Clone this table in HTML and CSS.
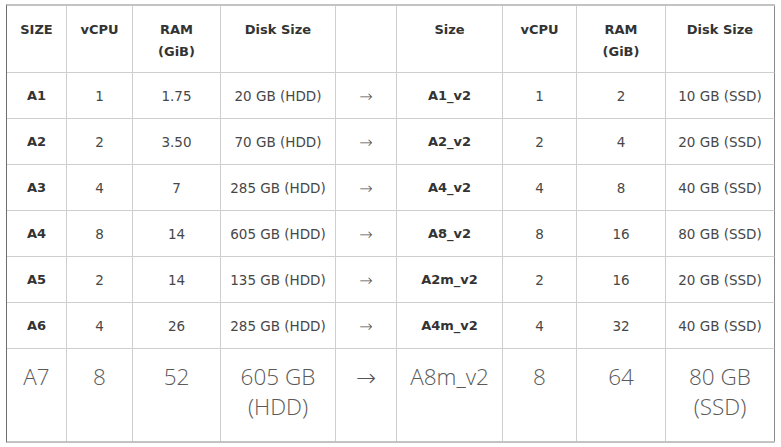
FILE: index.html
```html
<!DOCTYPE html>
<html lang="en">
<head>
<meta charset="utf-8">
<title>Size mapping</title>
<link rel="stylesheet" href="styles.css">
</head>
<body>
<table class="sizes">
  <colgroup>
    <col class="c1"><col class="c2"><col class="c3"><col class="c4"><col class="c5"><col class="c6"><col class="c7"><col class="c8"><col class="c9">
  </colgroup>
  <thead>
    <tr class="head">
      <th>SIZE</th><th>vCPU</th><th>RAM<br>(GiB)</th><th>Disk Size</th><th></th><th>Size</th><th>vCPU</th><th>RAM<br>(GiB)</th><th>Disk Size</th>
    </tr>
  </thead>
  <tbody>
    <tr class="row"><td class="name">A1</td><td>1</td><td>1.75</td><td>20 GB (HDD)</td><td class="arrow">→</td><td class="name">A1_v2</td><td>1</td><td>2</td><td>10 GB (SSD)</td></tr>
    <tr class="row"><td class="name">A2</td><td>2</td><td>3.50</td><td>70 GB (HDD)</td><td class="arrow">→</td><td class="name">A2_v2</td><td>2</td><td>4</td><td>20 GB (SSD)</td></tr>
    <tr class="row"><td class="name">A3</td><td>4</td><td>7</td><td>285 GB (HDD)</td><td class="arrow">→</td><td class="name">A4_v2</td><td>4</td><td>8</td><td>40 GB (SSD)</td></tr>
    <tr class="row"><td class="name">A4</td><td>8</td><td>14</td><td>605 GB (HDD)</td><td class="arrow">→</td><td class="name">A8_v2</td><td>8</td><td>16</td><td>80 GB (SSD)</td></tr>
    <tr class="row"><td class="name">A5</td><td>2</td><td>14</td><td>135 GB (HDD)</td><td class="arrow">→</td><td class="name">A2m_v2</td><td>2</td><td>16</td><td>20 GB (SSD)</td></tr>
    <tr class="row"><td class="name">A6</td><td>4</td><td>26</td><td>285 GB (HDD)</td><td class="arrow">→</td><td class="name">A4m_v2</td><td>4</td><td>32</td><td>40 GB (SSD)</td></tr>
    <tr class="big"><td>A7</td><td>8</td><td>52</td><td>605 GB<br>(HDD)</td><td class="arrow">→</td><td>A8m_v2</td><td>8</td><td>64</td><td>80 GB<br>(SSD)</td></tr>
  </tbody>
</table>
</body>
</html>
```
FILE: styles.css
```css
html, body {
  margin: 0;
  padding: 0;
  background: #ffffff;
}

body {
  padding: 4px 0 0 6px;
}

.sizes {
  table-layout: fixed;
  width: 769px;
  border-collapse: separate;
  border-spacing: 0;
  border-top: 2px solid #c3c3c3;
  border-bottom: 2px solid #c3c3c3;
  border-left: 1px solid #6e6e6e;
  font-family: "DejaVu Sans", Verdana, sans-serif;
  font-size: 13.5px;
  color: #474747;
}

.c1 { width: 60px; }
.c2 { width: 66px; }
.c3 { width: 88px; }
.c4 { width: 115px; }
.c5 { width: 61px; }
.c6 { width: 106px; }
.c7 { width: 74px; }
.c8 { width: 89px; }
.c9 { width: 109px; }

.sizes th,
.sizes td {
  padding: 0;
  text-align: center;
  vertical-align: top;
  border-right: 1px solid #cfcfcf;
  border-bottom: 1px solid #cfcfcf;
  box-sizing: border-box;
}

.sizes th:last-child,
.sizes td:last-child {
  border-right-color: #8a8a8a;
}

.head th {
  height: 67px;
  padding-top: 13px;
  line-height: 22px;
  font-size: 13px;
  font-weight: bold;
  color: #333333;
}

.row td {
  height: 46px;
  padding-top: 14px;
  line-height: 18px;
}

.row .name {
  font-size: 13px;
  font-weight: bold;
  color: #333333;
}

.sizes .arrow {
  font-family: "Noto Sans", "DejaVu Sans", sans-serif;
  font-weight: 300;
  color: #555555;
}

.row .arrow {
  font-size: 16px;
}

.big td {
  height: 92px;
  border-bottom: none;
  padding-top: 13px;
  font-family: "Open Sans", "Noto Sans", sans-serif;
  font-weight: 300;
  font-size: 22.5px;
  line-height: 30px;
  color: #5a5a5a;
}

.big .arrow {
  font-size: 24px;
}
```
